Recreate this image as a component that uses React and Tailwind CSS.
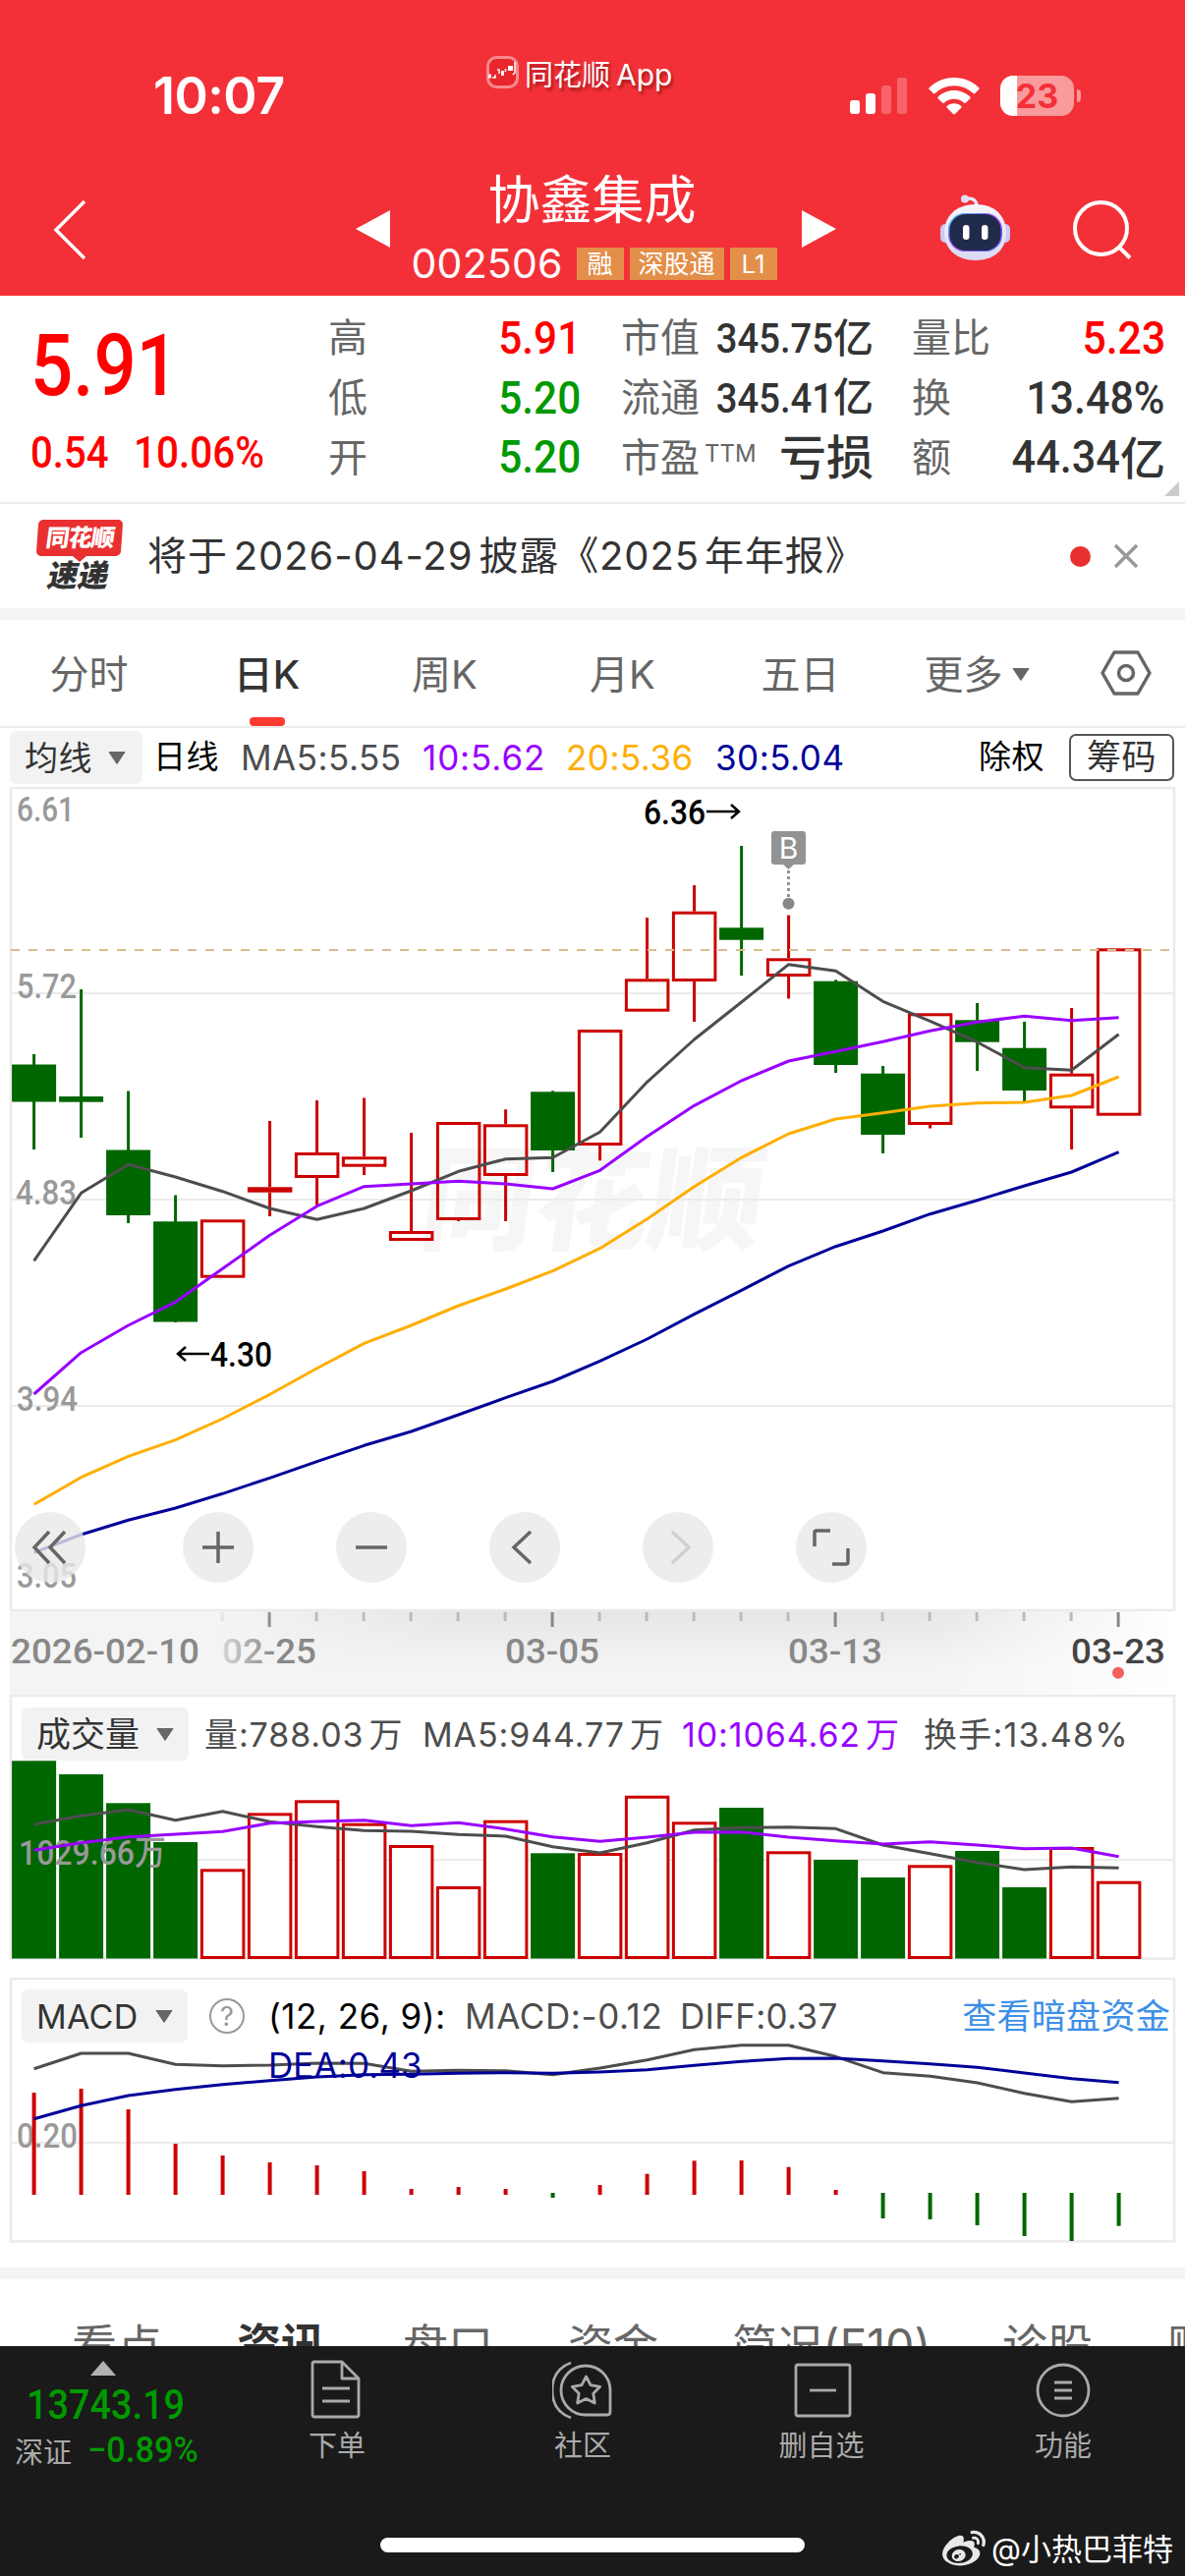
import { FaWeibo } from "react-icons/fa";

const RED = "#cc0000";
const GREEN = "#006600";

const STEP = 48;
const FIRST_X = 34.6;
const cx = (i) => FIRST_X + i * STEP;

// [color, high, bodyTop, bodyBottom, low]
const candles = [
  ["g", 1073, 1083.5, 1121.5, 1170],
  ["g", 1007, 1116, 1121.7, 1158],
  ["g", 1110.5, 1170.5, 1237, 1245],
  ["g", 1216.5, 1243.3, 1345.5, 1346],
  ["r", 1241.3, 1241.3, 1300.7, 1300.7],
  ["r", 1141, 1208.3, 1213.7, 1238],
  ["r", 1120, 1173, 1199, 1227],
  ["r", 1117.5, 1177.3, 1187.7, 1196],
  ["r", 1153, 1253, 1263, 1263],
  ["r", 1142, 1142, 1242, 1243],
  ["r", 1129.3, 1144.3, 1197, 1243],
  ["g", 1110.3, 1111.3, 1171, 1193],
  ["r", 1048, 1048, 1166, 1181.3],
  ["r", 934, 996.3, 1029.7, 1029.7],
  ["r", 901, 927.7, 999, 1040],
  ["g", 861, 944.3, 956.7, 993],
  ["r", 931.5, 975.3, 994, 1016.5],
  ["g", 997.3, 998.7, 1084, 1092],
  ["g", 1085, 1092.7, 1155, 1174],
  ["r", 1031.3, 1031.3, 1145, 1148.5],
  ["g", 1021, 1038.3, 1060.7, 1090],
  ["g", 1040, 1066.7, 1110, 1121],
  ["r", 1026, 1092.7, 1128.3, 1170],
  ["r", 965.3, 965.3, 1135.7, 1135.7],
];

const ma5 = [1283.3, 1214.3, 1185.3, 1198, 1212.7, 1230, 1241.3, 1230, 1212, 1192.3, 1179.7, 1178.3, 1152.3, 1101.3, 1058, 1020, 981.7, 988.3, 1019.3, 1039.3, 1060.7, 1086.7, 1089.3, 1052.7];
const ma10 = [1419, 1376.7, 1349, 1325.3, 1291.3, 1257.3, 1227.7, 1207.7, 1205, 1202.3, 1205, 1210, 1191.3, 1156.7, 1125.3, 1100, 1080, 1070.3, 1060.3, 1049.3, 1040.3, 1034.3, 1038.7, 1035.7];
const ma20 = [1531.3, 1503.7, 1482.3, 1465.7, 1444, 1419.3, 1392.7, 1367.3, 1349, 1329, 1312, 1293.7, 1270.7, 1240.7, 1207.7, 1178.3, 1154, 1139, 1132.7, 1126, 1122.7, 1122, 1115, 1096];
const ma30 = [1580.3, 1562, 1547.3, 1535, 1520.3, 1504.3, 1487.7, 1471.3, 1457, 1440, 1422.7, 1406, 1385.3, 1363, 1337.7, 1313.3, 1288.7, 1268.7, 1253, 1235.7, 1221.7, 1207, 1193, 1172.7];

const volTops = [1792.3, 1806, 1835.3, 1875, 1902.3, 1845.3, 1832.3, 1855.7, 1878, 1920, 1852.7, 1886.3, 1886, 1827.7, 1854.3, 1840, 1884.3, 1893, 1911, 1898.3, 1884, 1921, 1880, 1914.7];
const volMa5 = [1857, 1848.3, 1842, 1852.7, 1843.7, 1854.3, 1859.3, 1863.3, 1864, 1867.3, 1869, 1879.7, 1886, 1875.7, 1862.7, 1860.3, 1859.7, 1861.3, 1878, 1886.7, 1895.7, 1903, 1900.3, 1901.3];
const volMa10 = [1883.3, 1875.7, 1869.7, 1867, 1864.3, 1855.7, 1854, 1852.7, 1858.3, 1855.3, 1861.7, 1869.7, 1874.3, 1870, 1865, 1864.7, 1870, 1873.7, 1877, 1874.7, 1878, 1881.7, 1881, 1889.7];

const macdEnds = [2130, 2126, 2147, 2182, 2194, 2201, 2204, 2210, 2228, 2226, 2228, 2237, 2224, 2212.7, 2199.3, 2199, 2205.7, 2229, 2258, 2259, 2265, 2276, 2281, 2265.7];
const diff = [2105.7, 2090, 2090, 2101.3, 2102.7, 2102, 2100, 2100.3, 2108.3, 2107.3, 2107.7, 2111.7, 2105, 2096.7, 2086.3, 2081.7, 2081.7, 2093.3, 2109.7, 2113.3, 2120, 2130.7, 2139.3, 2135.7];
const dea = [2156.7, 2143.3, 2133, 2126.7, 2121.7, 2117.7, 2114, 2111.7, 2111.3, 2110.3, 2109.7, 2110.3, 2109, 2106.7, 2102.3, 2098.3, 2095.3, 2095, 2097.7, 2100.7, 2104.3, 2110, 2115.7, 2119.7];

const Line = ({ values, color }) => (
  <polyline
    points={values.map((y, i) => `${cx(i)},${y}`).join(" ")}
    fill="none"
    stroke={color}
    strokeWidth="3"
    strokeLinejoin="round"
  />
);

// Chart label squeezed to a given width
const Label = ({ x, y, w, fill = "#999", weight = 500, size = 35, children }) => (
  <text
    x={x}
    y={y}
    textLength={w}
    lengthAdjust="spacingAndGlyphs"
    fill={fill}
    fontSize={size}
    fontWeight={weight}
    className="font-['Roboto','Noto_Sans_CJK_SC',sans-serif]"
  >
    {children}
  </text>
);

// Narrow digits used for the quote values
const Num = ({ className = "", children }) => (
  <span
    className={`inline-block whitespace-nowrap font-['Roboto','Noto_Sans_CJK_SC',sans-serif] font-medium ${className}`}
  >
    {children}
  </span>
);

const Caret = ({ className = "" }) => (
  <svg width="18" height="13" viewBox="0 0 18 13" className={`shrink-0 ${className}`}>
    <path d="M1 0.5h16L9 12.5z" fill="#666" stroke="#666" strokeLinejoin="round" />
  </svg>
);

const StatusBar = () => (
  <div className="flex h-[155px]">
    <div className="w-[495px] pl-[156px] pt-[66px] text-[52px] leading-[64px] font-semibold tracking-[-0.5px]">
      10:07
    </div>
    <div className="flex w-[370px] items-start gap-[6px] pt-[57px]">
      <svg width="33" height="33" viewBox="0 0 33 33">
        <rect x="1.5" y="1.5" width="30" height="30" rx="9" fill="#e8262b" stroke="#fff" strokeOpacity="0.45" strokeWidth="3" />
        <path d="M2 18.5h3v4H2zM6 20h3M15 15h3v5h-3zM22 10h5v5h-5z" fill="#fff" />
        <path d="M6 22h3v-3M11 14h2v4M19.500 16v-3M29 6v11l-2 2" fill="none" stroke="#fff" strokeWidth="1.500" />
      </svg>
      <span className="text-[29px] leading-[38px] whitespace-nowrap [text-shadow:2px_3px_3px_rgba(80,0,0,0.5)]">
        同花顺<span className="ml-[6px] text-[30px]">App</span>
      </span>
    </div>
    <div className="flex items-start pt-[77px]">
      <svg width="58" height="40" viewBox="0 0 58 40" fill="#fff">
        <rect x="0" y="25" width="10" height="14" rx="3" />
        <rect x="16" y="18" width="10" height="21" rx="3" />
        <rect x="32" y="10" width="10" height="29" rx="3" opacity="0.25" />
        <rect x="48" y="2" width="10" height="37" rx="3" opacity="0.25" />
      </svg>
      <svg width="52" height="40" viewBox="0 0 52 40" fill="#fff" className="ml-[22px]">
        <path d="M26 2C16 2 7 6 0.8 12.2c-.6.6-.6 1.3 0 1.9l4 4c.5.5 1.2.5 1.8 0C11.700 13.200 18.500 10.200 26 10.200s14.300 3 19.400 7.900c.6.5 1.300.5 1.800 0l4-4c.6-.6.6-1.300 0-1.900C45 6 36 2 26 2z" />
        <path d="M26 15c-6.300 0-12 2.500-16.200 6.500-.6.6-.6 1.300 0 1.900l4.200 4.200c.5.5 1.200.5 1.800.1 2.700-2.500 6.300-4 10.200-4s7.500 1.500 10.200 4c.6.4 1.300.4 1.800-.1l4.200-4.200c.6-.6.6-1.300 0-1.900C38 17.500 32.300 15 26 15z" />
        <path d="M26 28.200c-2.800 0-5.300 1-7.200 2.700-.6.500-.6 1.200 0 1.800l6.200 6.200c.6.600 1.400.600 2 0l6.200-6.200c.6-.6.6-1.300 0-1.800-1.900-1.700-4.400-2.700-7.200-2.700z" />
      </svg>
      <div className="ml-[21px] flex h-[41px] w-[75px] items-center justify-center rounded-[13px] bg-[linear-gradient(90deg,#fff_23%,#f99a9d_23%)] text-[34px] leading-none font-bold text-[#f33038]">
        23
      </div>
      <div className="mt-[14px] ml-[3px] h-[13px] w-[4px] rounded-r-full bg-[#f99a9d]" />
    </div>
  </div>
);

const Robot = () => (
  <svg width="74" height="68" viewBox="0 0 74 68">
    <defs>
      <linearGradient id="robotHead" x1="0" y1="0" x2="0" y2="1">
        <stop offset="0" stopColor="#f6f6fd" />
        <stop offset="1" stopColor="#d9d9f2" />
      </linearGradient>
      <linearGradient id="robotRim" x1="0" y1="0" x2="1" y2="1">
        <stop offset="0" stopColor="#38c8f5" />
        <stop offset="0.500" stopColor="#a040f0" />
        <stop offset="1" stopColor="#4a6cf5" />
      </linearGradient>
    </defs>
    <path d="M38 12c0-6-3-8-9-8" fill="none" stroke="#e9e9fa" strokeWidth="3.500" />
    <circle cx="26" cy="4.500" r="4" fill="#dcdcf4" />
    <rect x="1" y="30" width="12" height="19" rx="5" fill="#c9caef" />
    <rect x="60" y="30" width="12" height="19" rx="5" fill="#c9caef" />
    <path d="M37 10c20 0 31 12 31 29 0 16-11 28-31 28S5 55 5 39c0-17 12-29 32-29z" fill="url(#robotHead)" />
    <rect x="9" y="19" width="55" height="39" rx="17" fill="url(#robotRim)" />
    <rect x="10.500" y="20" width="52" height="37" rx="16" fill="#202a4b" />
    <rect x="24" y="31" width="6.500" height="15" rx="3.200" fill="#fff" />
    <rect x="43" y="31" width="6.500" height="15" rx="3.200" fill="#fff" />
  </svg>
);

const Header = () => (
  <header className="h-[301px] bg-[#f33038] text-white">
    <StatusBar />
    <div className="flex h-[146px]">
      <svg width="34" height="62" viewBox="0 0 34 62" className="mt-[48px] ml-[54px]">
        <path d="M32 2L3 31l29 29" fill="none" stroke="#fff" strokeWidth="3.500" />
      </svg>
      <svg width="36" height="38" viewBox="0 0 36 38" className="mt-[59px] ml-[274px]">
        <path d="M35 0v38L0 19z" fill="#fff" />
      </svg>
      <div className="flex w-[418px] flex-col items-center pt-[19px]">
        <h1 className="mr-[9px] text-[53px] leading-[60px] whitespace-nowrap">协鑫集成</h1>
        <div className="mt-[18px] mr-[3px] flex w-[374px] items-center gap-[6px] text-[26px] leading-[33px]">
          <span className="mr-[9px] w-[153px] text-[41px] tracking-[0.2px]">002506</span>
          <span className="h-[33px] w-[48px] bg-[#e38e49] text-center">融</span>
          <span className="h-[33px] w-[96px] bg-[#e38e49] text-center">深股通</span>
          <span className="h-[33px] w-[48px] bg-[#e38e49] text-center">L1</span>
        </div>
      </div>
      <svg width="36" height="38" viewBox="0 0 36 38" className="mt-[59px]">
        <path d="M0 0v38l35-19z" fill="#fff" />
      </svg>
      <div className="mt-[43px] ml-[104px]">
        <Robot />
      </div>
      <svg width="62" height="62" viewBox="0 0 62 62" className="mt-[48px] ml-[61px]">
        <g fill="none" stroke="#fff" strokeWidth="4">
          <circle cx="29.500" cy="29.500" r="26.500" />
          <path d="M47.500 48l11.500 11.500" />
        </g>
      </svg>
    </div>
  </header>
);

const QuoteLabel = ({ children }) => (
  <span className="text-[40px] whitespace-nowrap text-[#666]">{children}</span>
);

const Quote = () => (
  <section className="flex h-[210px] text-[#333]">
    <div className="w-[334px] pl-[31px] text-[#ff0000]">
      <Num className="mt-[22px] block h-[98px] w-[170px] origin-left scale-x-[0.875] text-[87px] leading-[98px]">5.91</Num>
      <div className="mt-[13px] flex h-[54px] leading-[54px]">
        <Num className="w-[105px] origin-left scale-x-[0.91] text-[44px]">0.54</Num>
        <Num className="origin-left scale-x-[0.92] text-[44px]">10.06%</Num>
      </div>
    </div>
    <div className="grid w-[257px] grid-rows-3 pt-[13px] pb-[15px]">
      <div className="flex items-center justify-between">
        <QuoteLabel>高</QuoteLabel>
        <Num className="origin-right scale-x-[0.9] text-[47px] text-[#ff0000]">5.91</Num>
      </div>
      <div className="flex items-center justify-between">
        <QuoteLabel>低</QuoteLabel>
        <Num className="origin-right scale-x-[0.9] text-[47px] text-[#009900]">5.20</Num>
      </div>
      <div className="flex items-center justify-between">
        <QuoteLabel>开</QuoteLabel>
        <Num className="origin-right scale-x-[0.9] text-[47px] text-[#009900]">5.20</Num>
      </div>
    </div>
    <div className="ml-[41px] grid w-[257px] grid-rows-3 pt-[13px] pb-[15px]">
      <div className="flex items-center justify-between">
        <QuoteLabel>市值</QuoteLabel>
        <span className="flex items-center">
          <Num className="-ml-8 origin-right scale-x-[0.91] text-[42px]">345.75</Num>
          <span className="text-[41px] font-medium">亿</span>
        </span>
      </div>
      <div className="flex items-center justify-between">
        <QuoteLabel>流通</QuoteLabel>
        <span className="flex items-center">
          <Num className="-ml-8 origin-right scale-x-[0.91] text-[42px]">345.41</Num>
          <span className="text-[41px] font-medium">亿</span>
        </span>
      </div>
      <div className="flex items-center justify-between">
        <span className="flex items-start">
          <QuoteLabel>市盈</QuoteLabel>
          <span className="mt-[8px] ml-[5px] text-[24px] text-[#666]">TTM</span>
        </span>
        <span className="text-[48px] leading-none font-medium whitespace-nowrap">亏损</span>
      </div>
    </div>
    <div className="ml-[39px] grid w-[258px] grid-rows-3 pt-[13px] pb-[15px]">
      <div className="flex items-center justify-between">
        <QuoteLabel>量比</QuoteLabel>
        <Num className="origin-right scale-x-[0.91] text-[47px] text-[#ff0000]">5.23</Num>
      </div>
      <div className="flex items-center justify-between">
        <QuoteLabel>换</QuoteLabel>
        <Num className="origin-right scale-x-[0.915] text-[47px]">13.48%</Num>
      </div>
      <div className="flex items-center justify-between">
        <QuoteLabel>额</QuoteLabel>
        <span className="flex items-center">
          <Num className="origin-right scale-x-[0.92] text-[47px]">44.34</Num>
          <span className="text-[46px] leading-none font-medium">亿</span>
        </span>
      </div>
    </div>
    <svg width="15" height="15" viewBox="0 0 15 15" className="mt-[189px] ml-[-1px]">
      <path d="M15 0v15H0z" fill="#ccc" />
    </svg>
  </section>
);

const Notice = () => (
  <section className="flex h-[108px] items-center border-t-2 border-[#ebebeb]">
    <div className="ml-[38px] w-[86px]">
      <div className="mt-[-1px] flex h-[37px] -skew-x-4 items-center justify-center rounded-[5px] bg-[#e93030] text-[24px] font-black text-white">
        <span className="skew-x-[-4deg] tracking-[-1px]">同花顺</span>
      </div>
      <div className="mx-auto h-0 w-0 border-x-[7px] border-t-[6px] border-x-transparent border-t-[#e93030]" />
      <div className="-mt-[3px] mr-[2px] -skew-x-12 text-center text-[31px] leading-[34px] font-black text-[#333]">速递</div>
    </div>
    <p className="ml-[26px] w-[939px] text-[40px] tracking-[0.9px] whitespace-nowrap text-[#333]">
      将于<span className="mx-[6px]">2026-04-29</span>披露《2025<span className="ml-[5px]">年年报》</span>
    </p>
    <div className="h-[21px] w-[21px] rounded-full bg-[#e93030]" />
    <svg width="26" height="26" viewBox="0 0 26 26" className="ml-[23px]">
      <path d="M2 2l22 22M24 2L2 24" stroke="#999" strokeWidth="3.500" />
    </svg>
  </section>
);

const PeriodTabs = () => (
  <nav className="flex h-[110px] items-center border-b-2 border-[#ebebeb] text-[40px] text-[#666]">
    <span className="w-[181px] pt-[3px] text-center">分时</span>
    <span className="flex h-full w-[181px] flex-col items-center font-medium text-[#333]">
      <span className="h-[99px] leading-[111px]">日K</span>
      <span className="h-[9px] w-[36px] rounded-[4px] bg-[#fc3a30]" />
    </span>
    <span className="w-[181px] pt-[3px] text-center">周K</span>
    <span className="w-[181px] pt-[3px] text-center">月K</span>
    <span className="w-[181px] pt-[3px] text-center">五日</span>
    <span className="flex w-[181px] items-center justify-center gap-[9px] pt-[3px] pr-[3px]">
      更多
      <Caret />
    </span>
    <svg width="54" height="46" viewBox="0 0 54 46" className="ml-[33px]">
      <g fill="none" stroke="#666" strokeWidth="3.500" strokeLinejoin="round">
        <path d="M15 2h24l12 21-12 21H15L3 23z" />
        <circle cx="27" cy="23" r="7.500" />
      </g>
    </svg>
  </nav>
);

const MaRow = () => (
  <div className="flex h-[60px] items-center pl-[10px] text-[35px] tracking-[0.5px] whitespace-nowrap">
    <div className="flex h-[54px] w-[135px] items-center gap-[16px] rounded-[7px] bg-[#f2f2f2] pl-[15px] text-[34px] text-[#333]">
      均线
      <Caret />
    </div>
    <span className="ml-[11px] w-[89px] text-[33px] text-black">日线</span>
    <span className="w-[185px] text-[#4d4d4d]">MA5:5.55</span>
    <span className="w-[146px] tracking-[0.9px] text-[#9900ff]">10:5.62</span>
    <span className="w-[152px] text-[#ffae00]">20:5.36</span>
    <span className="w-[268px] text-[#000099]">30:5.04</span>
    <span className="w-[92px] text-[33px] text-black">除权</span>
    <span className="h-[48px] w-[107px] rounded-[7px] border-2 border-[#555] text-center text-[35px] leading-[43px] text-[#333]">
      筹码
    </span>
  </div>
);

const RoundButton = ({ className = "", children }) => (
  <button className={`flex h-[72px] w-[72px] items-center justify-center rounded-full bg-[#e8e8e8]/80 ${className}`}>
    <svg width="40" height="40" viewBox="0 0 40 40" fill="none" stroke="#666" strokeWidth="3.500">
      {children}
    </svg>
  </button>
);

const KLineChart = () => (
  <div className="relative h-[839px]">
    <svg width="1206" height="839" viewBox="0 801 1206 839" className="block">
      <text
        transform="translate(424 1263) skewX(-8)"
        fontSize="116"
        fontWeight="900"
        fill="#f6f6f6"
        className="font-['Noto_Sans_CJK_SC',sans-serif]"
      >
        同花顺
      </text>
      <g stroke="#ebebeb" strokeWidth="2">
        <path d="M11 1011H1195M11 1221H1195M11 1431H1195" />
        <rect x="11" y="802" width="1184" height="837" fill="none" strokeWidth="2.500" />
      </g>
      <Label x="17" y="836" w="59">6.61</Label>
      <Label x="17" y="1016" w="61">5.72</Label>
      <Label x="16" y="1226" w="62">4.83</Label>
      <Label x="17" y="1436" w="62">3.94</Label>
      <Label x="17" y="1615.500" w="61">3.05</Label>

      {candles.map(([type, high, top, bottom, low], i) =>
        type === "g" ? (
          <g key={i} fill={GREEN}>
            <rect x={cx(i) - 1.5} y={high} width="3" height={low - high} />
            <rect x={cx(i) - 22.5} y={top} width="45" height={bottom - top} />
          </g>
        ) : (
          <g key={i} fill="none" stroke={RED} strokeWidth="3">
            <path d={`M${cx(i)} ${high}V${top}M${cx(i)} ${bottom}V${low}`} />
            <rect x={cx(i) - 21.2} y={top + 1.5} width="42.500" height={bottom - top - 3} />
          </g>
        )
      )}

      <path d="M11 967H1195" stroke="#d9bd8c" strokeWidth="2" strokeDasharray="9 9" />
      <Line values={ma5} color="#4d4d4d" />
      <Line values={ma10} color="#9900ff" />
      <Line values={ma20} color="#ffae00" />
      <Line values={ma30} color="#000099" />

      {/* highest and lowest price */}
      <Label x="655" y="839" w="63" fill="#000">6.36</Label>
      <path d="M719 826h33M744 819l8 7-8 7" fill="none" stroke="#000" strokeWidth="2.500" />
      <Label x="214" y="1391" w="63" fill="#000">4.30</Label>
      <path d="M213 1378h-32M189 1371l-8 7 8 7" fill="none" stroke="#000" strokeWidth="2.500" />

      {/* buy marker */}
      <rect x="785" y="846" width="35" height="34" rx="3" fill="#939393" />
      <path d="M796 879h13l-6.500 6z" fill="#939393" />
      <path d="M802.500 886v27" stroke="#939393" strokeWidth="3" strokeDasharray="3 3" />
      <circle cx="802.500" cy="919.700" r="6" fill="#888" />
      <text x="802.500" y="874" textAnchor="middle" fontSize="30" fill="#fff">B</text>
    </svg>
    <div className="absolute top-[738px] left-[15px] flex">
      <RoundButton>
        <path d="M19 4L4 20l15 16M35 4L20 20l15 16" />
      </RoundButton>
      <RoundButton className="ml-[99px]">
        <path d="M20 4v32M4 20h32" />
      </RoundButton>
      <RoundButton className="ml-[84px]">
        <path d="M4 20h32" />
      </RoundButton>
      <RoundButton className="ml-[84px]">
        <path d="M26 4L9 20l17 16" />
      </RoundButton>
      <RoundButton className="ml-[84px]">
        <path d="M14 4l17 16-17 16" stroke="#d0d0d0" />
      </RoundButton>
      <RoundButton className="ml-[84px]">
        <path d="M3 19V5q0-2 2-2h14M37 21v14q0 2-2 2H21" />
      </RoundButton>
    </div>
  </div>
);

const TimeAxis = () => (
  <svg width="1206" height="85" viewBox="0 1640 1206 85" className="block">
    <defs>
      <linearGradient id="axisShade" x1="0" y1="0" x2="0" y2="1">
        <stop offset="0" stopColor="#e6e6e6" />
        <stop offset="0.7" stopColor="#f4f4f4" />
      </linearGradient>
      <linearGradient id="axisLeft" x1="0" y1="0" x2="1" y2="0">
        <stop offset="0" stopColor="#f4f4f4" />
        <stop offset="1" stopColor="#f4f4f4" stopOpacity="0" />
      </linearGradient>
      <linearGradient id="axisRight" x1="0" y1="0" x2="1" y2="0">
        <stop offset="0" stopColor="#fff" stopOpacity="0" />
        <stop offset="1" stopColor="#fff" />
      </linearGradient>
    </defs>
    <rect x="10" y="1640" width="1185" height="85" fill="url(#axisShade)" />
    <rect x="10" y="1640" width="200" height="85" fill="#f4f4f4" />
    <rect x="210" y="1640" width="250" height="85" fill="url(#axisLeft)" />
    <rect x="940" y="1640" width="256" height="85" fill="url(#axisRight)" />
    {candles.map((_, i) => {
      if (i < 4) return null;
      const major = i % 6 === 5;
      return (
        <path
          key={i}
          d={`M${cx(i) - 0.5} 1641v${major ? 15 : 9}`}
          stroke={major ? "#888" : "#bbb"}
          strokeWidth="3"
        />
      );
    })}
    <Label x="226" y="1693" w="96" fill="#888">02-25</Label>
    {/* the first date fades out under the pinned start date */}
    <rect x="205" y="1641" width="75" height="84" fill="url(#axisLeft)" />
    <Label x="11" y="1693" w="192" fill="#888">2026-02-10</Label>
    <Label x="514" y="1693" w="96" fill="#888">03-05</Label>
    <Label x="802" y="1693" w="96" fill="#888">03-13</Label>
    <Label x="1090" y="1693" w="96" fill="#444">03-23</Label>
    <circle cx="1138" cy="1702.700" r="6" fill="#f55f5f" />
  </svg>
);

const VolumePanel = () => (
  <div className="relative h-[270px]">
    <svg width="1206" height="270" viewBox="0 1725 1206 270" className="block">
      <rect x="11" y="1726" width="1184" height="267.500" fill="none" stroke="#ebebeb" strokeWidth="2.500" />
      <path d="M11 1893H1195" stroke="#ebebeb" strokeWidth="2" />
      {volTops.map((top, i) =>
        candles[i][0] === "g" ? (
          <rect key={i} x={cx(i) - 22.5} y={top} width="45" height={1993.5 - top} fill={GREEN} />
        ) : (
          <rect
            key={i}
            x={cx(i) - 21.2}
            y={top + 1.5}
            width="42.500"
            height={1991 - top}
            fill="#fff"
            stroke={RED}
            strokeWidth="3"
          />
        )
      )}
      <Label x="19" y="1898" w="150">1029.66万</Label>
      <Line values={volMa5} color="#4d4d4d" />
      <Line values={volMa10} color="#9900ff" />
    </svg>
    <div className="absolute top-[13px] left-[22px] flex items-center text-[34px] tracking-[0.9px] whitespace-nowrap text-[#4d4d4d]">
      <div className="mr-[16px] flex h-[54px] w-[170px] items-center gap-[17px] rounded-[7px] bg-[#f2f2f2] pl-[15px] text-[35px] tracking-normal text-[#333]">
        成交量
        <Caret />
      </div>
      <span className="w-[222px]">量:788.03<span className="ml-[5px]">万</span></span>
      <span className="w-[264px]">MA5:944.77<span className="ml-[5px]">万</span></span>
      <span className="w-[246px] text-[#9900ff]">10:1064.62<span className="ml-[5px]">万</span></span>
      <span className="tracking-[1.2px]">换手:13.48%</span>
    </div>
  </div>
);

const MacdPanel = () => (
  <div className="relative mt-[18px] h-[270px]">
    <svg width="1206" height="270" viewBox="0 2013 1206 270" className="block">
      <rect x="11" y="2014" width="1184" height="267.500" fill="none" stroke="#ebebeb" strokeWidth="2.500" />
      <path d="M11 2181H1195" stroke="#ebebeb" strokeWidth="2" />
      <Label x="17" y="2186" w="62">0.20</Label>
      {macdEnds.map((y, i) => (
        <path
          key={i}
          d={y < 2233 ? `M${cx(i)} 2234V${y}` : `M${cx(i)} 2232V${y}`}
          stroke={y < 2233 ? RED : GREEN}
          strokeWidth="4"
        />
      ))}
      <Line values={diff} color="#4d4d4d" />
      <Line values={dea} color="#000099" />
    </svg>
    <div className="absolute top-[12px] left-[22px] flex w-[1169px] items-center text-[35px] tracking-[0.3px] whitespace-nowrap text-[#4d4d4d]">
      <div className="flex h-[54px] w-[169px] items-center gap-[17px] rounded-[7px] bg-[#f2f2f2] pl-[15px] text-[34px] text-[#333]">
        MACD
        <Caret />
      </div>
      <span className="mr-[24px] ml-[22px] flex h-[36px] w-[36px] items-center justify-center rounded-full border-[2.5px] border-[#999] text-[27px] leading-none text-[#999]">
        ?
      </span>
      <span className="w-[200px] tracking-[0.5px] text-black">(12, 26, 9):</span>
      <span className="w-[219px] tracking-[0.6px]">MACD:-0.12</span>
      <span>DIFF:0.37</span>
      <span className="ml-auto text-[35px] text-[#3d8fe8]">查看暗盘资金</span>
    </div>
    <span className="absolute top-[68px] left-[273px] text-[35px] leading-[42px] tracking-[0.1px] text-[#000099]">
      DEA:0.43
    </span>
  </div>
);

const InfoTabs = () => (
  <nav className="flex h-[68px] items-start overflow-hidden pt-[34px] text-[46px] leading-[66px] whitespace-nowrap text-[#666]">
    <span className="ml-[73px] w-[168px] shrink-0">看点</span>
    <span className="w-[169px] shrink-0 text-[45px] font-bold text-[#333]">资讯</span>
    <span className="w-[168px] shrink-0">盘口</span>
    <span className="w-[167px] shrink-0">资金</span>
    <span className="w-[275px] shrink-0 tracking-[0.3px]">简况(F10)</span>
    <span className="w-[168px] shrink-0">诊股</span>
    <span className="shrink-0">财</span>
  </nav>
);

const NavItem = ({ label, className = "", children }) => (
  <div className={`flex flex-col items-center ${className}`}>
    <svg width="62" height="62" viewBox="0 0 62 62" fill="none" stroke="#aaa" strokeWidth="2.800" strokeLinejoin="round">
      {children}
    </svg>
    <span className="mt-[8px] text-[29px] leading-[38px] whitespace-nowrap">{label}</span>
  </div>
);

const BottomBar = () => (
  <footer className="flex h-[234px] flex-col bg-[#1a1a1a] text-[#aaa]">
    <div className="flex h-[190px]">
      <div className="w-[207px] pt-[15px]">
        <svg width="26" height="15" viewBox="0 0 26 15" className="ml-[92px] block">
          <path d="M13 0l13 15H0z" fill="#b3b3b3" />
        </svg>
        <Num className="ml-[27px] block origin-left scale-x-[0.9] text-[42px] leading-[60px] text-[#009900]">
          13743.19
        </Num>
        <div className="mt-[0px] ml-[15px] flex items-center leading-[38px]">
          <span className="w-[80px] text-[29px]">深证</span>
          <Num className="-mt-[6px] origin-left scale-x-[0.955] text-[36px] text-[#009900]">−0.89%</Num>
        </div>
      </div>
      <NavItem label="下单" className="w-[272px] pt-[13px]">
        <path d="M6 5q0-2 2-2h28l17 17v37q0 2-2 2H8q-2 0-2-2zM36 3v17h17M16 30h28M16 43h28" />
      </NavItem>
      <NavItem label="社区" className="w-[228px] pt-[13px]">
        <path d="M34 7a25 25 0 0 0 0 50h22q3 0 3-3V32A25 25 0 0 0 34 7z" />
        <path d="M19 4Q0 11 0 32t19 28" />
        <path d="M34.500 18l4.500 8.700 9.700 1.600-6.900 7 1.500 9.700-8.800-4.400-8.800 4.400 1.500-9.700-6.900-7 9.700-1.600z" />
      </NavItem>
      <NavItem label="删自选" className="w-[258px] pt-[13px]">
        <rect x="5" y="6" width="55" height="52" rx="2" />
        <path d="M19 32h27" />
      </NavItem>
      <NavItem label="功能" className="w-[234px] pt-[13px]">
        <circle cx="31" cy="32" r="26" />
        <path d="M22 24h18M22 32h18M22 40h18" />
      </NavItem>
    </div>
    <div className="flex">
      <div className="mt-[5px] ml-[387px] h-[15px] w-[432px] rounded-full bg-white" />
      <div className="-mt-[5px] ml-[140px] flex items-center text-white">
        <FaWeibo size={44} color="#e8e8e8" />
        <span className="ml-[6px] text-[31px] leading-[40px] whitespace-nowrap">@小热巴菲特</span>
      </div>
    </div>
  </footer>
);

const App = () => {
  return (
    <div className="h-[2622px] w-[1206px] overflow-hidden bg-white font-['Inter','Noto_Sans_CJK_SC',sans-serif]">
      <Header />
      <Quote />
      <Notice />
      <div className="h-[12px] bg-[#f4f4f4]" />
      <PeriodTabs />
      <MaRow />
      <KLineChart />
      <TimeAxis />
      <VolumePanel />
      <MacdPanel />
      <div className="mt-[25px] h-[12px] bg-[#f4f4f4]" />
      <InfoTabs />
      <BottomBar />
    </div>
  );
};

export default App;
